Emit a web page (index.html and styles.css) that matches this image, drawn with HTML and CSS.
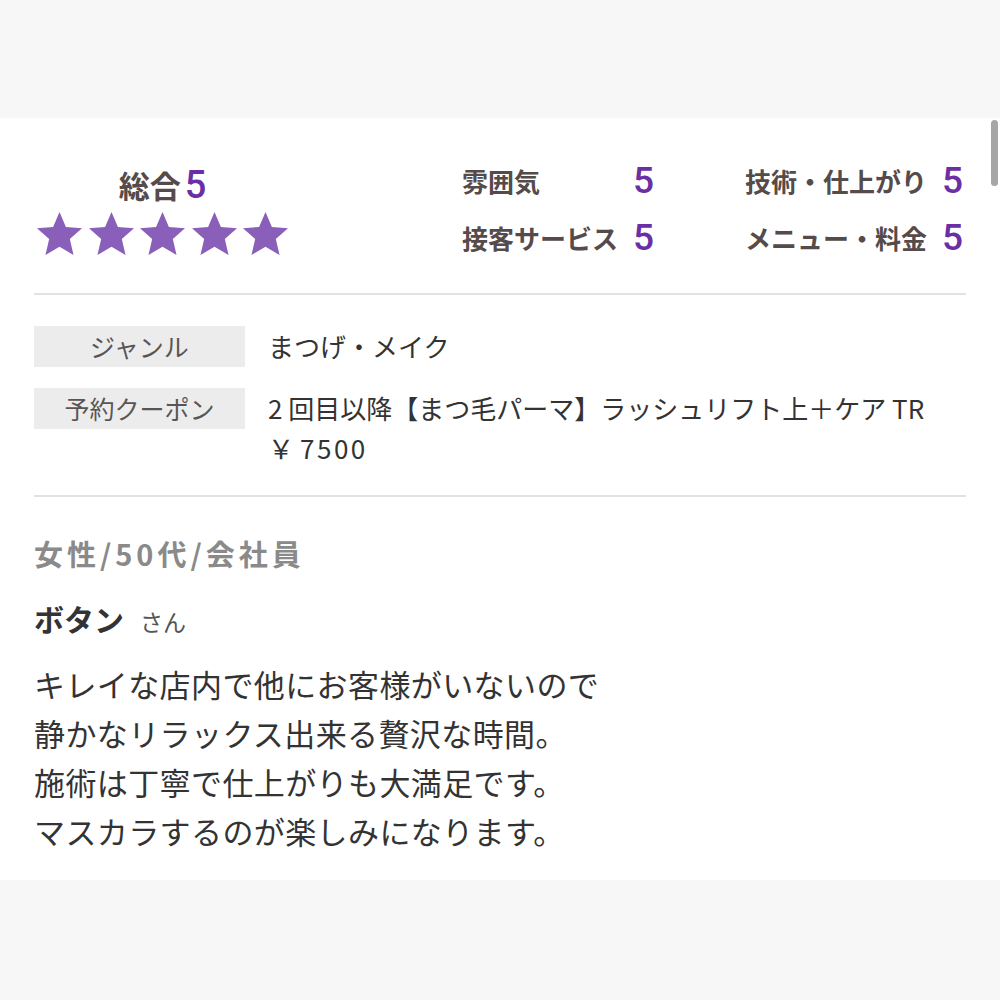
FILE: index.html
```html
<!DOCTYPE html>
<html lang="ja">
<head>
<meta charset="utf-8">
<link rel="stylesheet" href="styles.css">
</head>
<body>
<div class="band"></div>
<div class="card">
  <div class="scrollbar"></div>
  <section class="ratings">
    <div class="overall">
      <div class="overall-title">総合<span class="num big">5</span></div>
      <div class="stars">
        <svg class="star" viewBox="1.1 0.6 21.8 20.8"><polygon points="12,0.6 15.1,7.8 22.9,8.5 17,13.7 18.8,21.4 12,17.4 5.2,21.4 7,13.7 1.1,8.5 8.9,7.8"/></svg>
        <svg class="star" viewBox="1.1 0.6 21.8 20.8"><polygon points="12,0.6 15.1,7.8 22.9,8.5 17,13.7 18.8,21.4 12,17.4 5.2,21.4 7,13.7 1.1,8.5 8.9,7.8"/></svg>
        <svg class="star" viewBox="1.1 0.6 21.8 20.8"><polygon points="12,0.6 15.1,7.8 22.9,8.5 17,13.7 18.8,21.4 12,17.4 5.2,21.4 7,13.7 1.1,8.5 8.9,7.8"/></svg>
        <svg class="star" viewBox="1.1 0.6 21.8 20.8"><polygon points="12,0.6 15.1,7.8 22.9,8.5 17,13.7 18.8,21.4 12,17.4 5.2,21.4 7,13.7 1.1,8.5 8.9,7.8"/></svg>
        <svg class="star" viewBox="1.1 0.6 21.8 20.8"><polygon points="12,0.6 15.1,7.8 22.9,8.5 17,13.7 18.8,21.4 12,17.4 5.2,21.4 7,13.7 1.1,8.5 8.9,7.8"/></svg>
      </div>
    </div>
    <div class="detail">
      <div class="item col1"><span class="lbl">雰囲気</span><span class="num">5</span></div>
      <div class="item col2"><span class="lbl">技術・仕上がり</span><span class="num">5</span></div>
      <div class="item col1"><span class="lbl">接客サービス</span><span class="num">5</span></div>
      <div class="item col2"><span class="lbl">メニュー・料金</span><span class="num">5</span></div>
    </div>
  </section>
  <section class="info">
    <div class="row">
      <div class="tag">ジャンル</div>
      <div class="val">まつげ・メイク</div>
    </div>
    <div class="row">
      <div class="tag">予約クーポン</div>
      <div class="val">2 回目以降【まつ毛パーマ】ラッシュリフト上＋ケア TR<br>￥<span class="digits">7500</span></div>
    </div>
  </section>
  <section class="review">
    <div class="profile">女性/50代/会社員</div>
    <div class="name">ボタン<span class="san">さん</span></div>
    <p class="body">キレイな店内で他にお客様がいないので<br>静かなリラックス出来る贅沢な時間。<br>施術は丁寧で仕上がりも大満足です。<br>マスカラするのが楽しみになります。</p>
  </section>
</div>
<div class="band bottom"></div>
</body>
</html>
```
FILE: styles.css
```css
html, body {
  margin: 0;
  padding: 0;
}
body {
  background: #f7f7f7;
  font-family: "Noto Sans CJK JP", "Noto Sans", sans-serif;
  color: #333;
}
.band {
  height: 118px;
  background: #f7f7f7;
}
.band.bottom {
  height: 120px;
}
.card {
  position: relative;
  background: #fff;
  height: 762px;
  padding: 0 34px;
  box-sizing: border-box;
  overflow: hidden;
}
.scrollbar {
  position: absolute;
  right: 2px;
  top: 2px;
  width: 7px;
  height: 66px;
  border-radius: 4px;
  background: #a6a6a6;
}
.ratings {
  display: flex;
  box-sizing: border-box;
  padding-top: 47px;
  height: 177px;
  border-bottom: 2px solid #e2e2e2;
}
.overall {
  width: 257px;
  display: flex;
  flex-direction: column;
  align-items: center;
}
.overall-title {
  font-size: 31px;
  font-weight: bold;
  color: #554b4b;
  line-height: 40px;
  display: flex;
  align-items: center;
}
.num {
  font-family: Roboto, "Liberation Sans", Arial, sans-serif;
  font-weight: 500;
  color: #6a2fa4;
  font-size: 37px;
  line-height: 40px;
}
.num.big {
  font-size: 38px;
  margin-left: 4px;
}
.stars {
  display: flex;
  gap: 6.5px;
  margin-top: 7px;
}
.star {
  width: 45px;
  height: 43px;
  fill: #8a5fba;
}
.detail {
  margin-left: 171px;
  margin-top: -4px;
  display: grid;
  grid-template-columns: 283px auto;
  row-gap: 17px;
  align-content: start;
}
.item {
  display: flex;
  align-items: center;
  height: 40px;
}
.lbl {
  font-size: 26px;
  font-weight: bold;
  color: #554b4b;
  line-height: 40px;
}
.col1 .lbl {
  width: 171px;
}
.col2 .lbl {
  width: 197px;
}
.info {
  padding: 31px 0 27px;
  border-bottom: 2px solid #e2e2e2;
  display: flex;
  flex-direction: column;
  gap: 21px;
}
.row {
  display: flex;
  align-items: flex-start;
}
.tag {
  width: 211px;
  height: 41px;
  background: #ececec;
  color: #5a5555;
  font-size: 25px;
  line-height: 41px;
  text-align: center;
  flex-shrink: 0;
}
.val {
  margin-left: 23px;
  font-size: 26px;
  line-height: 40px;
  color: #333;
}
.digits {
  margin-left: 6px;
  letter-spacing: 2.5px;
}
.review {
  padding-top: 36px;
}
.profile {
  font-size: 29px;
  font-weight: bold;
  color: #8a8a8a;
  line-height: 40px;
  letter-spacing: 4px;
}
.name {
  margin-top: 25px;
  font-size: 30px;
  font-weight: bold;
  color: #333;
  line-height: 40px;
}
.san {
  font-size: 23px;
  font-weight: normal;
  color: #555;
  margin-left: 16px;
}
.body {
  margin: 18px 0 0;
  font-size: 31px;
  line-height: 49px;
  letter-spacing: 0.4px;
  color: #333;
}
```
